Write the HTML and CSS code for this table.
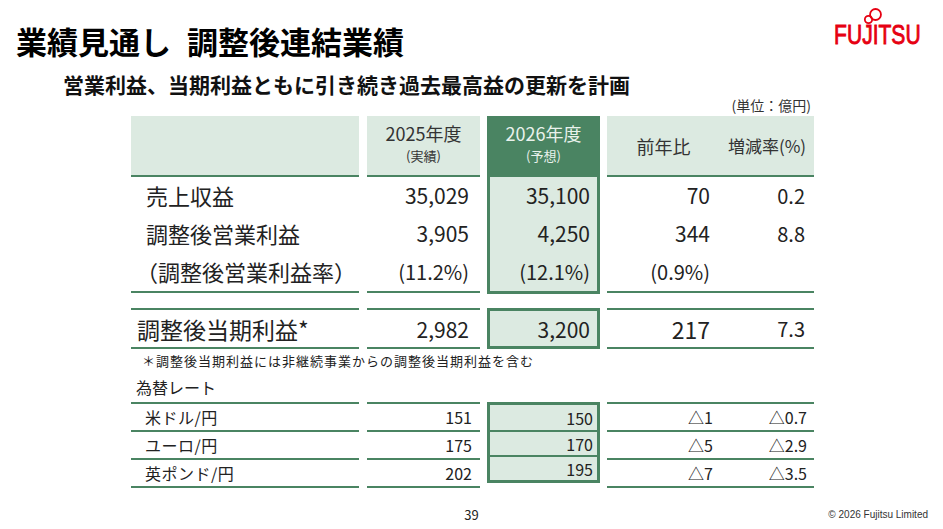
FILE: index.html
```html
<!DOCTYPE html>
<html lang="ja">
<head>
<meta charset="utf-8">
<title>業績見通し 調整後連結業績</title>
<link rel="stylesheet" href="styles.css">
</head>
<body>
<div class="page">
  <header class="top">
    <h1 class="title">業績見通し 調整後連結業績</h1>
    <svg class="logo" width="92" height="50" viewBox="0 0 118 50" preserveAspectRatio="none" aria-label="FUJITSU">
      <ellipse cx="48.1" cy="15.5" rx="4.7" ry="3.7" fill="none" stroke="#e60012" stroke-width="1.8" vector-effect="non-scaling-stroke"/>
      <ellipse cx="57.1" cy="10.5" rx="7" ry="5.5" fill="none" stroke="#e60012" stroke-width="1.8" vector-effect="non-scaling-stroke"/>
      <text x="4" y="40" class="logo-text">FUJITSU</text>
    </svg>
  </header>
  <p class="subtitle">営業利益、当期利益ともに引き続き過去最高益の更新を計画</p>

  <div class="tables">
    <div class="unit">(単位：億円)</div>

    <div class="block">
      <div class="col col-label">
        <div class="head"></div>
        <div class="rows">
          <div class="row r1 label">売上収益</div>
          <div class="row r1 label">調整後営業利益</div>
          <div class="row r1 label label-ratio">（調整後営業利益率）</div>
        </div>
      </div>
      <div class="col col-num">
        <div class="head"><span class="yr">2025年度</span><span class="sub">(実績)</span></div>
        <div class="rows">
          <div class="row r1 num">35,029</div>
          <div class="row r1 num">3,905</div>
          <div class="row r1 num small">(11.2%)</div>
        </div>
      </div>
      <div class="col col-num col-fc">
        <div class="head head-dark"><span class="yr">2026年度</span><span class="sub">(予想)</span></div>
        <div class="rows box box-main">
          <div class="row r1 num">35,100</div>
          <div class="row r1 num">4,250</div>
          <div class="row r1 num small">(12.1%)</div>
        </div>
      </div>
      <div class="col col-diff">
        <div class="head head-split"><span class="ha">前年比</span><span class="hb">増減率(%)</span></div>
        <div class="rows">
          <div class="row r1 pair"><span class="a">70</span><span class="b">0.2</span></div>
          <div class="row r1 pair"><span class="a">344</span><span class="b">8.8</span></div>
          <div class="row r1 pair"><span class="a small">(0.9%)</span><span class="b"></span></div>
        </div>
      </div>
    </div>

    <div class="block block-net">
      <div class="col col-label">
        <div class="rows lined">
          <div class="row r2 label label-net">調整後当期利益*</div>
        </div>
      </div>
      <div class="col col-num">
        <div class="rows lined">
          <div class="row r2 num">2,982</div>
        </div>
      </div>
      <div class="col col-num col-fc">
        <div class="rows box box-full">
          <div class="row r2b num">3,200</div>
        </div>
      </div>
      <div class="col col-diff">
        <div class="rows lined">
          <div class="row r2 pair"><span class="a big">217</span><span class="b">7.3</span></div>
        </div>
      </div>
    </div>

    <p class="note">＊調整後当期利益には非継続事業からの調整後当期利益を含む</p>
    <p class="fx-title">為替レート</p>

    <div class="block block-fx">
      <div class="col col-label">
        <div class="rows lined-top">
          <div class="row r3 label label-fx">米ドル/円</div>
          <div class="row r3 label label-fx">ユーロ/円</div>
          <div class="row r3 label label-fx">英ポンド/円</div>
        </div>
      </div>
      <div class="col col-num">
        <div class="rows lined-top">
          <div class="row r3 num fx">151</div>
          <div class="row r3 num fx">175</div>
          <div class="row r3 num fx">202</div>
        </div>
      </div>
      <div class="col col-num col-fc">
        <div class="rows box box-full box-fx">
          <div class="row r3b num fx">150</div>
          <div class="row r3b num fx">170</div>
          <div class="row r3b num fx">195</div>
        </div>
      </div>
      <div class="col col-diff">
        <div class="rows lined-top">
          <div class="row r3 pair fx"><span class="a">△1</span><span class="b">△0.7</span></div>
          <div class="row r3 pair fx"><span class="a">△5</span><span class="b">△2.9</span></div>
          <div class="row r3 pair fx"><span class="a">△7</span><span class="b">△3.5</span></div>
        </div>
      </div>
    </div>
  </div>

  <footer class="foot">
    <span></span>
    <span class="pageno">39</span>
    <span class="copy">© 2026 Fujitsu Limited</span>
  </footer>
</div>
</body>
</html>
```

FILE: styles.css
```css
* {
  box-sizing: border-box;
}

html, body {
  margin: 0;
  padding: 0;
  background: #ffffff;
}

body {
  font-family: "Noto Sans CJK JP", "Noto Sans", sans-serif;
  color: #222222;
}

.page {
  width: 943px;
  height: 529px;
  overflow: hidden;
  display: flex;
  flex-direction: column;
}

/* ---------- header ---------- */
.top {
  display: flex;
  justify-content: space-between;
  align-items: flex-start;
  padding: 0 20px 0 16px;
}

.title {
  margin: 23px 0 0 0;
  font-size: 31px;
  line-height: 36px;
  font-weight: 700;
  color: #000000;
  word-spacing: 9px;
}

.logo {
  display: block;
  margin-top: 4px;
  overflow: visible;
}

.logo-text {
  font-family: "Liberation Sans", "DejaVu Sans", sans-serif;
  font-size: 27px;
  font-weight: 400;
  fill: #e60012;
  stroke: #e60012;
  stroke-width: 0.9;
}

.subtitle {
  margin: 12px 0 0 63px;
  font-size: 21px;
  line-height: 26px;
  font-weight: 700;
  color: #111111;
}

/* ---------- tables ---------- */
.tables {
  margin-left: 131px;
  width: 683px;
}

.unit {
  text-align: right;
  font-size: 14px;
  line-height: 16px;
  margin-bottom: 3px;
  padding-right: 3px;
  color: #333333;
}

.block {
  display: flex;
  align-items: flex-start;
}

.col-label {
  width: 228px;
}

.col-num {
  width: 113px;
  margin-left: 8px;
}

.col-fc {
  margin-left: 7px;
}

.col-diff {
  width: 207px;
  margin-left: 7px;
}

.head {
  height: 61px;
  background: #dceae1;
  border-bottom: 2px solid #4a8462;
  display: flex;
  flex-direction: column;
  align-items: center;
  justify-content: center;
  padding-bottom: 6px;
  color: #333333;
}

.head-dark {
  background: #4a8462;
  border-bottom: 0;
  padding-bottom: 8px;
  color: #e9f2ec;
}

.head .yr {
  font-size: 18px;
  line-height: 26px;
}

.head .sub {
  font-size: 13px;
  line-height: 20px;
}

.head-split {
  flex-direction: row;
  align-items: center;
  justify-content: flex-start;
  padding-bottom: 0;
}

.head-split .ha {
  width: 113px;
  text-align: center;
  font-size: 18px;
}

.head-split .hb {
  width: 94px;
  text-align: center;
  font-size: 17px;
}

.rows {
  border-bottom: 2px solid #4a8462;
}

.rows.lined {
  border-top: 2px solid #4a8462;
}

.rows.lined-top {
  border-top: 2px solid #4a8462;
  border-bottom: 0;
}

.rows.lined-top .row {
  border-bottom: 2px solid #4a8462;
}

.box {
  background: #dceae1;
  border: 3px solid #4a8462;
}

.box-main {
  border-top: 0;
}

.box-fx .row + .row {
  border-top: 2px solid #4a8462;
}

.row {
  display: flex;
  align-items: center;
  white-space: nowrap;
}

.r1 {
  height: 38px;
  padding-bottom: 2px;
}

.r2 {
  height: 37px;
}

.r2b {
  height: 35px;
}

.r3 {
  height: 28px;
  padding-bottom: 1px;
}

.r3b {
  height: 25px;
}

.label {
  font-size: 22px;
  padding-left: 15px;
  color: #222222;
}

.label-ratio {
  padding-left: 5px;
}

.label-net {
  font-size: 23px;
  padding-left: 6px;
}

.label-fx {
  font-size: 16px;
  padding-left: 14px;
  letter-spacing: 0.5px;
}

.num {
  justify-content: flex-end;
  padding-right: 11px;
  font-size: 21px;
}

.box .num {
  padding-right: 7px;
}

.num.small,
.pair .small {
  font-size: 20px;
}

.pair .big {
  font-size: 23px;
}

.num.fx {
  font-size: 16px;
  padding-right: 8px;
}

.box .num.fx {
  padding-right: 4px;
}

.pair {
  font-size: 21px;
}

.pair .a {
  width: 113px;
  text-align: right;
  padding-right: 10px;
}

.pair .b {
  width: 94px;
  text-align: right;
  padding-right: 9px;
  font-size: 20px;
}

.pair.fx .a,
.pair.fx .b {
  font-size: 16px;
  padding-right: 7px;
}

.block-net {
  margin-top: 14px;
}

.note {
  margin: 3px 0 0 0;
  padding-left: 11px;
  font-size: 13px;
  line-height: 18px;
  letter-spacing: 1px;
  color: #222222;
}

.fx-title {
  margin: 6px 0 0 0;
  padding-left: 5px;
  font-size: 16px;
  line-height: 22px;
  color: #222222;
}

.block-fx {
  margin-top: 4px;
}

/* ---------- footer ---------- */
.foot {
  margin-top: auto;
  display: grid;
  grid-template-columns: 1fr auto 1fr;
  align-items: center;
  padding: 0 15px 6px 15px;
  height: 22px;
}

.pageno {
  font-size: 13px;
  line-height: 16px;
  color: #222222;
}

.copy {
  justify-self: end;
  font-family: "Liberation Sans", sans-serif;
  font-size: 10px;
  line-height: 16px;
  color: #333333;
}
```
